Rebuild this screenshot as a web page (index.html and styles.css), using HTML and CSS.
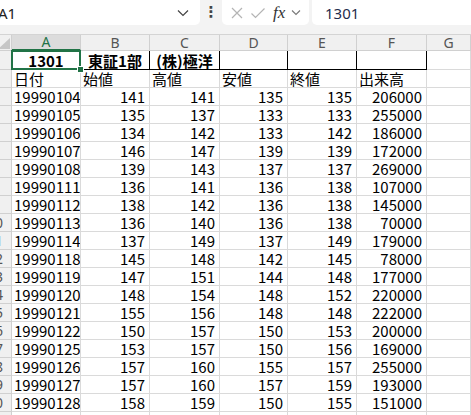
FILE: index.html
```html
<!DOCTYPE html>
<html lang="ja">
<head>
    <meta charset="UTF-8">
    <title>Sheet1</title>
    <link rel="stylesheet" href="styles.css">
</head>
<body>

    <!-- 数式バー -->
    <div class="bar">
        <div class="namebox">
            <span class="ref">A1</span>
            <svg class="chev" width="12" height="8" viewBox="0 0 12 8"><path d="M1 1.5 L6 6.5 L11 1.5" fill="none" stroke="#444" stroke-width="1.2"/></svg>
        </div>
        <div class="dots">⋮</div>
        <div class="fxbox">
            <svg width="14" height="14" viewBox="0 0 14 14"><path d="M2 2 L12 12 M12 2 L2 12" stroke="#b4b4b4" stroke-width="1.2"/></svg>
            <svg width="16" height="14" viewBox="0 0 16 14"><path d="M1.5 7.5 L5.5 11.5 L14.5 2.5" fill="none" stroke="#b4b4b4" stroke-width="1.2"/></svg>
            <span class="fx">fx</span>
            <svg width="10" height="7" viewBox="0 0 10 7"><path d="M1 1.5 L5 5.5 L9 1.5" fill="none" stroke="#777" stroke-width="1.1"/></svg>
        </div>
        <div class="input">1301</div>
    </div>

    <!-- シート -->
    <table class="sheet">
        <colgroup>
            <col style="width:12px"><col style="width:69px"><col style="width:69px"><col style="width:70px">
            <col style="width:68px"><col style="width:69px"><col style="width:70px"><col>
        </colgroup>
        <tbody id="rows">
            <tr class="head">
                <th class="corner"><svg width="12" height="15" viewBox="0 0 12 15"><polygon points="10,3 10,14 -2,14" fill="#c6c6c6"/></svg></th>
                <th class="ch on">A</th><th class="ch">B</th><th class="ch">C</th><th class="ch">D</th><th class="ch">E</th><th class="ch">F</th><th class="ch">G</th>
            </tr>
            <tr class="r1">
                <th class="rh"><div class="rh-in"><span>1</span></div></th>
                <td class="t1 sel">1301</td><td class="t1">東証1部</td><td class="t1">(株)極洋</td><td class="t1"></td><td class="t1"></td><td class="t1"></td><td></td>
            </tr>
            <tr>
                <th class="rh"><div class="rh-in"><span>2</span></div></th>
                <td>日付</td><td>始値</td><td>高値</td><td>安値</td><td>終値</td><td>出来高</td><td></td>
            </tr>
        </tbody>
    </table>

    <script>
        let data = [
            ["19990104", 141, 141, 135, 135, 206000],
            ["19990105", 135, 137, 133, 133, 255000],
            ["19990106", 134, 142, 133, 142, 186000],
            ["19990107", 146, 147, 139, 139, 172000],
            ["19990108", 139, 143, 137, 137, 269000],
            ["19990111", 136, 141, 136, 138, 107000],
            ["19990112", 138, 142, 136, 138, 145000],
            ["19990113", 136, 140, 136, 138, 70000],
            ["19990114", 137, 149, 137, 149, 179000],
            ["19990118", 145, 148, 142, 145, 78000],
            ["19990119", 147, 151, 144, 148, 177000],
            ["19990120", 148, 154, 148, 152, 220000],
            ["19990121", 155, 156, 148, 148, 222000],
            ["19990122", 150, 157, 150, 153, 200000],
            ["19990125", 153, 157, 150, 156, 169000],
            ["19990126", 157, 160, 155, 157, 255000],
            ["19990127", 157, 160, 157, 159, 193000],
            ["19990128", 158, 159, 150, 155, 151000],
            ["", "", "", "", "", ""]
        ];

        let body = document.getElementById("rows");
        data.forEach((row, i) => {
            let tr = document.createElement("tr");
            let html = `<th class="rh"><div class="rh-in"><span>${i + 3}</span></div></th>`;
            row.forEach((v, j) => {
                html += j === 0 ? `<td>${v}</td>` : `<td class="n">${v}</td>`;
            });
            html += "<td></td>";
            tr.innerHTML = html;
            body.appendChild(tr);
        });
    </script>

</body>
</html>
```

FILE: styles.css
```css
body {
    margin: 0;
    background: white;
    font-family: "Noto Sans CJK JP", sans-serif;
    overflow: hidden;
}

.bar {
    display: flex;
    height: 35px;
    box-sizing: border-box;
    background: #f3f3f3;
    border-bottom: 1px solid #d4d4d4;
}

.namebox, .fxbox, .input {
    height: 25px;
    background: white;
    display: flex;
    align-items: center;
    box-sizing: border-box;
}

.namebox {
    width: 200px;
    border-radius: 0 0 5px 0;
    justify-content: space-between;
    padding-right: 11px;
}

.ref {
    font-family: "Noto Sans", sans-serif;
    font-size: 15px;
    color: #222;
    margin-left: -2px;
}

.dots {
    width: 22px;
    height: 25px;
    line-height: 25px;
    text-align: center;
    font-family: "DejaVu Sans", sans-serif;
    font-size: 15px;
    font-weight: bold;
    color: #444;
}

.fxbox {
    width: 87px;
    border-radius: 0 0 5px 5px;
    padding-left: 8px;
    gap: 6px;
}

.fx {
    font-family: "Liberation Serif", serif;
    font-style: italic;
    font-size: 17px;
    color: #333;
    margin-left: 1px;
}

.input {
    flex: 1;
    margin-left: 3px;
    border-radius: 0 0 0 5px;
    padding-left: 13px;
    font-family: "Noto Sans", sans-serif;
    font-size: 15px;
    color: #1f2d4d;
}

.sheet {
    table-layout: fixed;
    width: 471px;
    border-spacing: 0;
    border-collapse: separate;
    font-size: 15px;
    color: black;
}

.sheet tr { height: 18px; }
.sheet tr.head { height: 16px; }
.sheet tr.r1 { height: 19px; }

.sheet td {
    padding: 0 0 0 2px;
    line-height: 17px;
    white-space: nowrap;
    overflow: hidden;
    border-right: 1px solid #dadada;
    border-bottom: 1px solid #dadada;
}

.sheet td.n {
    text-align: right;
    padding: 0 4px 0 0;
}

.sheet td.t1 {
    text-align: center;
    font-weight: bold;
    padding: 0;
    border-right: 1px solid black;
    border-bottom: 1px solid black;
}

.sheet th {
    padding: 0;
    background: #f0f0f0;
    font-family: "Noto Sans", sans-serif;
    font-weight: normal;
    font-size: 14px;
    line-height: 14px;
    color: #555;
    border-right: 1px solid #d0d0d0;
    border-bottom: 1px solid #d0d0d0;
}

.corner svg { display: block; }

.ch.on {
    background: #dcdcdc;
    color: #217346;
    border-bottom: 2px solid #217346;
}

.rh { overflow: hidden; }

/* row numbers are centred in a header that is mostly scrolled out of view */
.rh-in {
    display: flex;
    justify-content: flex-end;
    white-space: nowrap;
    line-height: 17px;
}

.rh-in span {
    flex: none;
    width: 32px;
    text-align: center;
}

.sheet td.sel {
    position: relative;
    overflow: visible;
}

.sel::after {
    content: "";
    position: absolute;
    left: -1px;
    top: -1px;
    right: -1px;
    bottom: -1px;
    border: 2px solid #217346;
}

.sel::before {
    content: "";
    position: absolute;
    right: -4px;
    bottom: -4px;
    width: 5px;
    height: 5px;
    background: #217346;
    border: 1px solid white;
    z-index: 1;
}
```
